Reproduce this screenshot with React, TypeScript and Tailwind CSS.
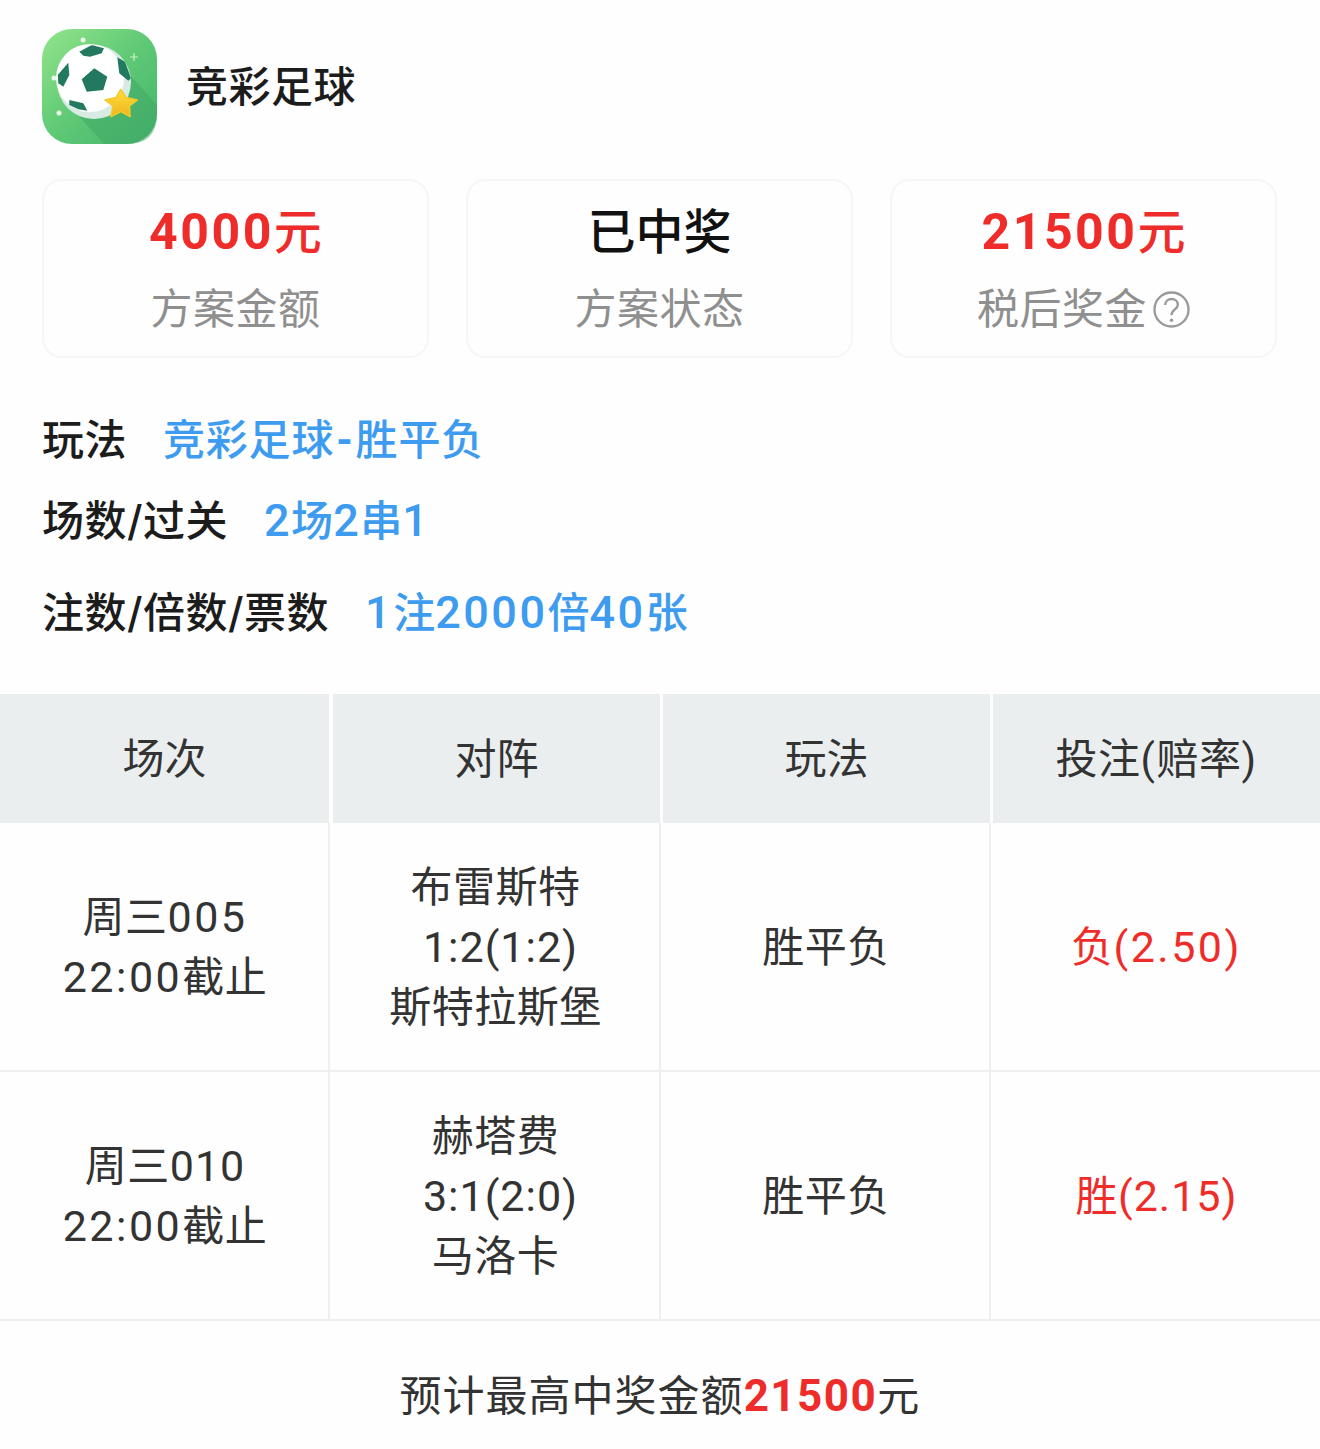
const font = "font-['Inter','Noto_Sans_CJK_SC',sans-serif]";

// latin runs (digits, colons, brackets) sit in their own span, they are spaced wider than the CJK text
function Mixed({ text, latin }: { text: string; latin: string }) {
  const parts = text.split(/([\x21-\x7e]+)/);
  return (
    <>
      {parts.map((part, i) =>
        i % 2 === 1 ? (
          <span key={i} className={`font-['Roboto',sans-serif] leading-none ${latin}`}>{part}</span>
        ) : (
          <span key={i}>{part}</span>
        )
      )}
    </>
  );
}

function AppIcon() {
  return (
    <svg width="115" height="115" viewBox="0 0 115 115" className="shrink-0">
      <defs>
        <linearGradient id="bg" x1="0" y1="0" x2="1" y2="1">
          <stop offset="0" stopColor="#93e58a" />
          <stop offset="0.5" stopColor="#5fc976" />
          <stop offset="1" stopColor="#43b56a" />
        </linearGradient>
        <linearGradient id="star" x1="0" y1="0" x2="0" y2="1">
          <stop offset="0" stopColor="#ffdf3a" />
          <stop offset="1" stopColor="#eeb420" />
        </linearGradient>
        <clipPath id="ball">
          <circle cx="52" cy="53" r="37" />
        </clipPath>
      </defs>
      <rect width="115" height="115" rx="30" fill="url(#bg)" />
      <path d="M88 46 L115 76 L115 85 Q115 115 85 115 L62 115 L36 86 Z" fill="#3fa565" opacity="0.5" />
      <circle cx="52" cy="53" r="37" fill="#d8ebe2" />
      <circle cx="48" cy="49" r="34" fill="#ffffff" />
      <g clipPath="url(#ball)" fill="#23795f">
        <path d="M37.3 22.7 L49.7 16 L62 19.3 L59.7 24.3 L48 27.7 L41.3 26.7 Z" />
        <path d="M52.3 39.3 L65.3 47.7 L61.3 61 L44.7 62.7 L39.7 50.3 Z" />
        <path d="M26.3 33.7 L27.3 46 L21.3 57.7 L16.3 54.3 L15.7 46 Z" />
        <path d="M75.3 28.3 L83 32.7 L89 49.3 L86.3 51.7 L77.3 44.3 Z" />
        <path d="M27.3 71 L41.3 74.3 L45.3 81.7 L36.3 80.3 L27.3 76 Z" />
      </g>
      <circle cx="41" cy="11" r="2.5" fill="#e9f8e6" />
      <circle cx="12" cy="49" r="2.5" fill="#e9f8e6" />
      <circle cx="17" cy="84" r="2.5" fill="#e9f8e6" />
      <path d="M92 24 V32 M88 28 H96" stroke="#c6f0c2" strokeWidth="1.2" />
      <path d="M78.7 60.3 L84 68.5 L95.3 71 L87.5 77 L88 87.7 L79 82.5 L69 87.7 L71 77 L63 71 L74 68.5 Z" fill="url(#star)" stroke="#f6c926" strokeWidth="1.5" strokeLinejoin="round" />
    </svg>
  );
}

function Stat({ value, label, tone, help }: { value: string; label: string; tone: string; help?: boolean }) {
  return (
    <div className="w-[387px] h-[179px] rounded-[20px] border-2 border-[#f6f6f6] flex flex-col items-center pt-[21px]">
      <div className={`text-[48px] leading-[60px] font-medium ${tone}`}>
        <Mixed text={value} latin="text-[50px] font-bold tracking-[2.5px]" />
      </div>
      <div className="mt-[17px] text-[42px] leading-[60px] text-[#8f8f8f] flex items-center tracking-[0.5px]">
        {label}
        {help && (
          <svg width="37" height="37" viewBox="0 0 38 38" className="ml-[6px]">
            <circle cx="19" cy="19" r="17.5" fill="none" stroke="#9a9a9a" strokeWidth="2.4" />
            <path d="M12.5 14.5 C12.5 6 25.5 6.5 25.5 14 C25.5 19 19 19 19 25" fill="none" stroke="#9a9a9a" strokeWidth="2.4" />
            <circle cx="19" cy="30" r="1.8" fill="#9a9a9a" />
          </svg>
        )}
      </div>
    </div>
  );
}

function Info({ label, value, latin, className }: { label: string; value: string; latin: string; className: string }) {
  return (
    <div className={`flex items-center gap-[36px] text-[42px] leading-[60px] ${className}`}>
      <span className="font-medium text-[#1c1c1c] tracking-[0.5px]">{label}</span>
      <span className="font-medium text-[#3d9bf0]">
        <Mixed text={value} latin={latin} />
      </span>
    </div>
  );
}

function Row({ time, home, score, away, pick, tight }: { time: string; home: string; score: string; away: string; pick: string; tight?: boolean }) {
  const wide = "text-[43px] tracking-[2.5px]";
  // a run holding a "1" reads too wide at the same spacing
  const oneRun = tight ? "text-[43px] tracking-[1px]" : wide;
  return (
    <div className="grid grid-cols-[330px_331px_330px_329px] h-[249px] border-b-2 border-[#efefef] text-[42px] leading-[60px] text-[#333333] text-center tracking-[0.5px]">
      <div className="border-r-2 border-[#efefef] flex items-center justify-center pl-[2px]">
        <div>
          <Mixed text={time} latin={oneRun} /><br />
          <Mixed text="22:00截止" latin={wide} />
        </div>
      </div>
      <div className="border-r-2 border-[#efefef] flex items-center justify-center pl-[2px]">
        <div>
          {home}<br />
          <Mixed text={score} latin="text-[43px] tracking-[1px] pl-[10px]" /><br />
          {away}
        </div>
      </div>
      <div className="border-r-2 border-[#efefef] flex items-center justify-center pl-[2px]">胜平负</div>
      <div className="flex items-center justify-center text-[#ee2d2a] pl-[2px]">
        <div><Mixed text={pick} latin={oneRun} /></div>
      </div>
    </div>
  );
}

export default function App() {
  return (
    <div className={`w-[1320px] h-[1449px] bg-[#fefefe] overflow-hidden ${font}`}>
      <div className="flex items-center gap-[29px] pl-[42px] pt-[29px]">
        <AppIcon />
        <div className="text-[42px] leading-[60px] font-medium text-[#1c1c1c] tracking-[0.5px]">竞彩足球</div>
      </div>

      <div className="flex gap-[37px] px-[42px] mt-[35px]">
        <Stat value="4000元" label="方案金额" tone="text-[#ee2d2a]" />
        <Stat value="已中奖" label="方案状态" tone="text-[#111111]" />
        <Stat value="21500元" label="税后奖金" tone="text-[#ee2d2a]" help />
      </div>

      <div className="px-[42px] mt-[52px]">
        <Info label="玩法" value="竞彩足球-胜平负" latin="font-bold px-[2px]" className="tracking-[0.8px]" />
        <Info label="场数/过关" value="2场2串1" latin="text-[45px] tracking-[1.5px]" className="mt-[21px]" />
        <Info label="注数/倍数/票数" value="1注2000倍40张" latin="text-[45px] tracking-[2.5px]" className="mt-[32px]" />
      </div>

      <div className="mt-[51px] flex h-[129px] text-[42px] text-[#333333] text-center">
        <div className="w-[329px] bg-[#ebeeef] flex items-center justify-center">场次</div>
        <div className="w-[327px] ml-[4px] bg-[#ebeeef] flex items-center justify-center">对阵</div>
        <div className="w-[327px] ml-[3px] bg-[#ebeeef] flex items-center justify-center">玩法</div>
        <div className="w-[327px] ml-[3px] bg-[#ebeeef] flex items-center justify-center tracking-[0.5px]">
          <div><Mixed text="投注(赔率)" latin="tracking-[1.5px]" /></div>
        </div>
      </div>

      <Row time="周三005" home="布雷斯特" score="1:2(1:2)" away="斯特拉斯堡" pick="负(2.50)" />
      <Row time="周三010" home="赫塔费" score="3:1(2:0)" away="马洛卡" pick="胜(2.15)" tight />

      <div className="h-[148px] flex items-center justify-center text-[42px] text-[#333333] tracking-[1px]">
        <div>
          预计最高中奖金额<span className="font-['Roboto',sans-serif] leading-none text-[44px] font-bold text-[#ee2d2a] tracking-[1.5px]">21500</span>元
        </div>
      </div>
    </div>
  );
}
